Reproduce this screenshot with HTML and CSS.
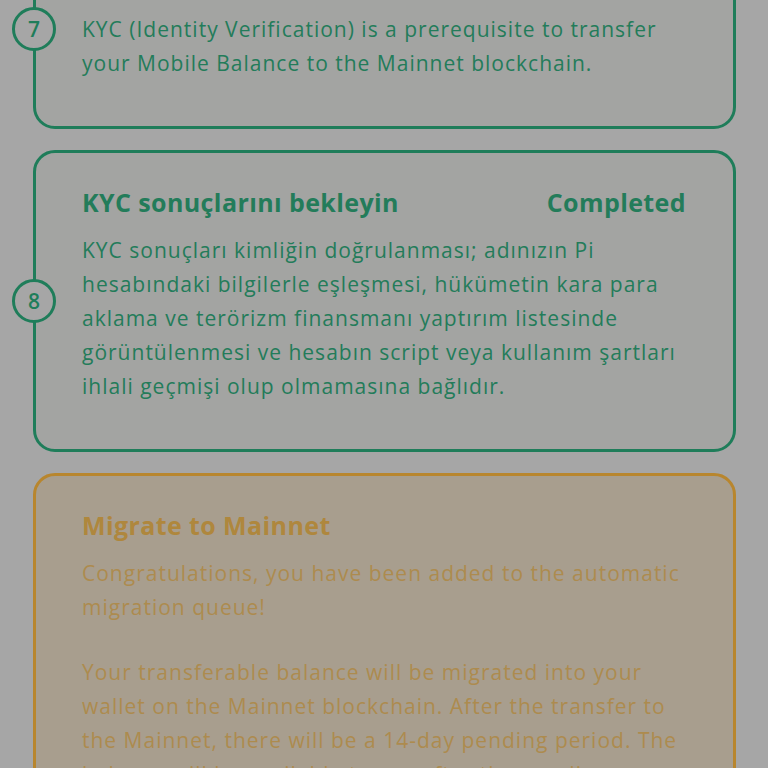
FILE: index.html
```html
<!DOCTYPE html>
<html lang="tr">
<head>
<meta charset="utf-8">
<title>Mainnet Checklist</title>
<link rel="stylesheet" href="styles.css">
</head>
<body>
<div class="steps">
  <section class="step step-green step-cont">
    <span class="step-num">7</span>
    <p class="step-text">KYC (Identity Verification) is a prerequisite to transfer your Mobile Balance to the Mainnet blockchain.</p>
  </section>

  <section class="step step-green">
    <span class="step-num">8</span>
    <div class="step-head">
      <h2 class="step-title">KYC sonuçlarını bekleyin</h2>
      <span class="step-status">Completed</span>
    </div>
    <p class="step-text">KYC sonuçları kimliğin doğrulanması; adınızın Pi hesabındaki bilgilerle eşleşmesi, hükümetin kara para aklama ve terörizm finansmanı yaptırım listesinde görüntülenmesi ve hesabın script veya kullanım şartları ihlali geçmişi olup olmamasına bağlıdır.</p>
  </section>

  <section class="step step-gold">
    <div class="step-head">
      <h2 class="step-title">Migrate to Mainnet</h2>
    </div>
    <p class="step-text">Congratulations, you have been added to the automatic migration queue!</p>
    <p class="step-text">Your transferable balance will be migrated into your wallet on the Mainnet blockchain. After the transfer to the Mainnet, there will be a 14-day pending period. The balance will be available to use after the pending period.</p>
  </section>
</div>
</body>
</html>
```
FILE: styles.css
```css
* { box-sizing: border-box; }
html, body { margin: 0; padding: 0; }
body {
  background: #a6a6a6;
  font-family: "Open Sans", "Liberation Sans", sans-serif;
  overflow: hidden;
}
.steps {
  margin-top: -71px;
  padding: 0 32px 40px 33px;
  display: flex;
  flex-direction: column;
  gap: 21px;
}
.step {
  position: relative;
  border: 3px solid #1f7d5a;
  border-radius: 22px;
  background: #a3a4a2;
  padding: 32px 47px 46px 46px;
  color: #237c5a;
}
.step-cont { padding-top: 80px; }
.step-gold {
  border-color: #b8862e;
  background: #a89e8e;
  color: #ad8b4e;
}
.step-gold .step-title { color: #af873d; }
.step-num {
  position: absolute;
  left: -24px;
  top: 50%;
  transform: translateY(-50%);
  width: 44px;
  height: 44px;
  border: 3px solid #1f7d5a;
  border-radius: 50%;
  background: #a6a6a6;
  display: flex;
  align-items: center;
  justify-content: center;
  font-size: 21px;
  font-weight: 600;
  color: #1f7d5a;
}
.step-head {
  display: flex;
  justify-content: space-between;
  align-items: center;
  margin-bottom: 14px;
}
.step-title, .step-status {
  margin: 0;
  font-size: 25px;
  line-height: 34px;
  font-weight: 700;
  letter-spacing: 0.4px;
}
.step-text {
  margin: 0;
  font-size: 21px;
  line-height: 34px;
  letter-spacing: 1px;
}
.step-text + .step-text { margin-top: 31px; }
```
